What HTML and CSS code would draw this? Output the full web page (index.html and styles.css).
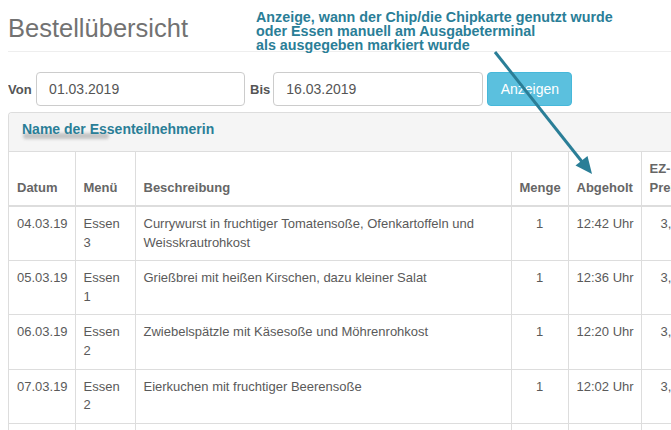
FILE: index.html
```html
<!DOCTYPE html>
<html lang="de">
<head>
<meta charset="utf-8">
<title>Bestellübersicht</title>
<link rel="stylesheet" href="styles.css">
</head>
<body>
<div class="page">
  <div class="page-header">
    <h1 class="title">Bestellübersicht</h1>
  </div>
  <div class="note">Anzeige, wann der Chip/die Chipkarte genutzt wurde<br>oder Essen manuell am Ausgabeterminal<br>als ausgegeben markiert wurde</div>

  <form class="filter">
    <label class="lbl lbl-von">Von</label>
    <input class="field field-von" type="text" value="01.03.2019">
    <label class="lbl lbl-bis">Bis</label>
    <input class="field field-bis" type="text" value="16.03.2019">
    <button class="btn" type="button">Anzeigen</button>
  </form>

  <div class="panel">
    <div class="panel-heading">
      <span class="name">Name der Essenteilnehmerin</span>
      <span class="blur"></span>
    </div>
    <table class="orders">
      <thead>
        <tr>
          <th class="c-date">Datum</th>
          <th class="c-menu">Menü</th>
          <th class="c-desc">Beschreibung</th>
          <th class="c-qty center">Menge</th>
          <th class="c-time">Abgeholt</th>
          <th class="c-price">EZ-Preis</th>
        </tr>
      </thead>
      <tbody>
        <tr>
          <td>04.03.19</td>
          <td>Essen 3</td>
          <td>Currywurst in fruchtiger Tomatensoße, Ofenkartoffeln und Weisskrautrohkost</td>
          <td class="center">1</td>
          <td class="time">12:42 Uhr</td>
          <td class="price">3,30 €</td>
        </tr>
        <tr>
          <td>05.03.19</td>
          <td>Essen 1</td>
          <td>Grießbrei mit heißen Kirschen, dazu kleiner Salat</td>
          <td class="center">1</td>
          <td class="time">12:36 Uhr</td>
          <td class="price">3,30 €</td>
        </tr>
        <tr>
          <td>06.03.19</td>
          <td>Essen 2</td>
          <td>Zwiebelspätzle mit Käsesoße und Möhrenrohkost</td>
          <td class="center">1</td>
          <td class="time">12:20 Uhr</td>
          <td class="price">3,30 €</td>
        </tr>
        <tr>
          <td>07.03.19</td>
          <td>Essen 2</td>
          <td>Eierkuchen mit fruchtiger Beerensoße</td>
          <td class="center">1</td>
          <td class="time">12:02 Uhr</td>
          <td class="price">3,30 €</td>
        </tr>
        <tr>
          <td>08.03.19</td>
          <td>Essen 1</td>
          <td>Gemüsesuppe mit Brötchen</td>
          <td class="center">1</td>
          <td class="time">12:15 Uhr</td>
          <td class="price">3,30 €</td>
        </tr>
      </tbody>
    </table>
  </div>

  <svg class="arrow" width="671" height="430" viewBox="0 0 671 430" aria-hidden="true">
    <line x1="495" y1="52" x2="583" y2="163" stroke="#2a7e97" stroke-width="3"/>
    <polygon points="592,174 575.5,165.5 587.5,156" fill="#2a7e97"/>
  </svg>
</div>
</body>
</html>
```

FILE: styles.css
```css
body {
  margin: 8px 0 0 8px;
  font-family: "Liberation Sans", Arial, sans-serif;
  color: #555;
  background: #fff;
}
.page {
  position: relative;
}
.page-header {
  border-bottom: 1px solid #eee;
  padding-bottom: 5px;
}
.title {
  margin: 0;
  padding-top: 2px;
  font-size: 25.5px;
  line-height: 36px;
  font-weight: normal;
  color: #727272;
}
.note {
  position: absolute;
  left: 248px;
  top: 2px;
  font-size: 14.3px;
  line-height: 14px;
  font-weight: bold;
  color: #2a7e97;
  white-space: nowrap;
}
.filter {
  display: flex;
  align-items: center;
  margin: 20px 0 0;
}
.lbl {
  font-size: 13px;
  font-weight: bold;
  color: #555;
}
.lbl-von {
  margin-right: 4.5px;
}
.lbl-bis {
  margin-right: 3px;
}
.field {
  box-sizing: border-box;
  height: 34px;
  padding: 6px 12px;
  font-family: "Liberation Sans", Arial, sans-serif;
  font-size: 14px;
  color: #555;
  border: 1px solid #ccc;
  border-radius: 4px;
  background: #fff;
  margin: 0;
}
.field-von {
  width: 209px;
  margin-right: 5px;
}
.field-bis {
  width: 210px;
  margin-right: 4px;
}
.btn {
  box-sizing: border-box;
  height: 34px;
  width: 85px;
  padding: 6px 12px;
  font-family: "Liberation Sans", Arial, sans-serif;
  font-size: 14px;
  color: #fff;
  background: #5bc0de;
  border: 1px solid #46b8da;
  border-radius: 4px;
  margin: 0;
}
.panel {
  margin-top: 6px;
  border: 1px solid #ddd;
  border-right: 0;
  border-radius: 4px 0 0 4px;
  background: #fff;
}
.panel-heading {
  position: relative;
  background: #f5f5f5;
  border-bottom: 1px solid #ddd;
  border-radius: 3px 0 0 0;
  padding: 6px 13px 12px;
  line-height: 19px;
}
.name {
  position: relative;
  z-index: 1;
  font-size: 14px;
  font-weight: bold;
  color: #2a7e97;
}
.blur {
  position: absolute;
  left: 14px;
  top: 20px;
  width: 86px;
  height: 6px;
  background: #c4c4c4;
  filter: blur(1.5px);
  border-radius: 3px;
}
.orders {
  border-collapse: collapse;
  table-layout: fixed;
  width: 100%;
  font-size: 13px;
  line-height: 18.57px;
}
.orders th {
  box-sizing: border-box;
}
.orders .c-date { width: 66px; }
.orders .c-menu { width: 60px; }
.orders .c-desc { width: 376px; }
.orders .c-qty { width: 57px; }
.orders .c-time { width: 73px; }
.orders th,
.orders td {
  padding: 8px;
  border: 1px solid #ddd;
  text-align: left;
}
.orders th {
  vertical-align: bottom;
  font-weight: bold;
  color: #666;
  border-top: 0;
  border-bottom: 2px solid #ddd;
}
.orders td {
  vertical-align: top;
  color: #5a5a5a;
}
.orders td.time {
  white-space: nowrap;
}
.orders th:first-child,
.orders td:first-child {
  border-left: 0;
}
.orders th:last-child,
.orders td:last-child {
  border-right: 0;
  padding-right: 0;
  overflow: hidden;
}
.orders .center {
  text-align: center;
}
.orders td.price {
  padding-left: 19px;
  white-space: nowrap;
}
.arrow {
  position: absolute;
  left: -8px;
  top: -8px;
  pointer-events: none;
}
```
